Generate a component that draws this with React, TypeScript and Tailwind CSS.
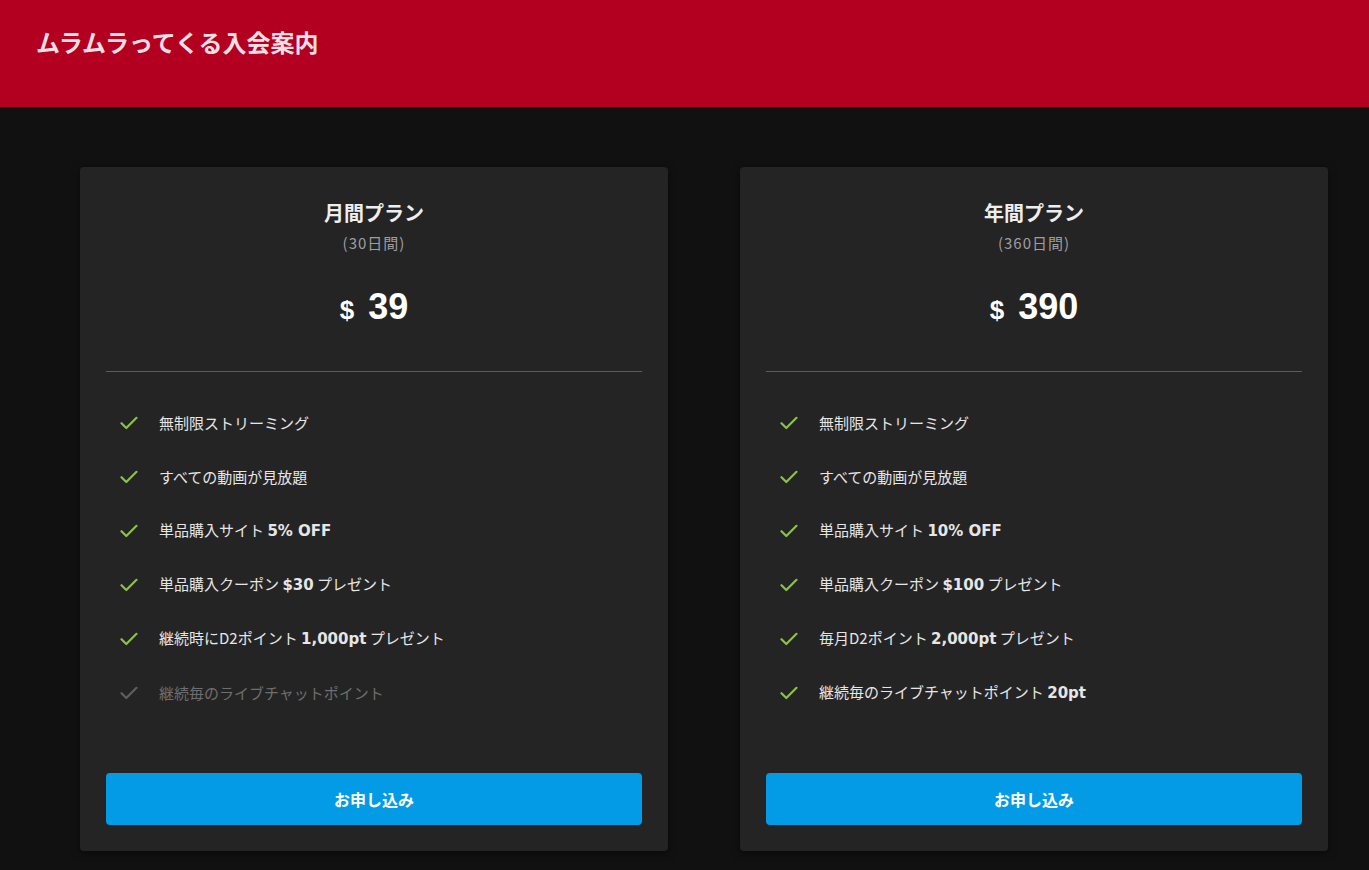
import type { ReactNode } from 'react';

type Feature = { text: ReactNode; muted?: boolean };

interface Plan {
  name: string;
  term: string;
  price: string;
  features: Feature[];
}

const B = ({ children }: { children: ReactNode }) => (
  <span className="font-bold" style={{ fontFamily: '"DejaVu Sans", "Noto Sans CJK JP", sans-serif' }}>
    {children}
  </span>
);

const plans: Plan[] = [
  {
    name: '月間プラン',
    term: '(30日間)',
    price: '39',
    features: [
      { text: '無制限ストリーミング' },
      { text: 'すべての動画が見放題' },
      { text: <>単品購入サイト <B>5% OFF</B></> },
      { text: <>単品購入クーポン <B>$30</B> プレゼント</> },
      { text: <>継続時にD2ポイント <B>1,000pt</B> プレゼント</> },
      { text: '継続毎のライブチャットポイント', muted: true },
    ],
  },
  {
    name: '年間プラン',
    term: '(360日間)',
    price: '390',
    features: [
      { text: '無制限ストリーミング' },
      { text: 'すべての動画が見放題' },
      { text: <>単品購入サイト <B>10% OFF</B></> },
      { text: <>単品購入クーポン <B>$100</B> プレゼント</> },
      { text: <>毎月D2ポイント <B>2,000pt</B> プレゼント</> },
      { text: <>継続毎のライブチャットポイント <B>20pt</B></> },
    ],
  },
];

const Check = ({ muted }: { muted?: boolean }) => (
  <svg width="18" height="14" viewBox="0 0 18 14" fill="none" className="shrink-0">
    <path
      d="M1.5 7.2 L6.3 12 L16.5 1.8"
      stroke={muted ? '#5f5f5f' : '#8bc34a'}
      strokeWidth="2.2"
      strokeLinecap="round"
      strokeLinejoin="round"
    />
  </svg>
);

const PlanCard = ({ plan }: { plan: Plan }) => (
  <div className="flex w-[588px] flex-col rounded-[4px] bg-[#242424] px-[26px] pb-[26px] pt-[32px] shadow-[0_2px_8px_rgba(0,0,0,0.5)]">
    <div className="text-center">
      <h2 className="text-[20px] font-bold leading-[28px] text-[#eeeeee]">{plan.name}</h2>
      <p className="mt-[2px] text-[15px] leading-[28px] tracking-[1px] text-[#9e9e9e]">{plan.term}</p>
      <div
        className="mt-[29px] flex items-baseline justify-center gap-[14px] font-bold text-white"
        style={{ fontFamily: '"Liberation Sans", Arial, sans-serif' }}
      >
        <span className="text-[26px]">$</span>
        <span className="text-[36px] leading-[42px]">{plan.price}</span>
      </div>
    </div>
    <div className="mt-[41px] h-px bg-[#5c5c5c]" />
    <ul className="mt-[39px] flex flex-col gap-[30px]">
      {plan.features.map((f, i) => (
        <li key={i} className="flex h-[24px] items-center gap-[21px] pl-[14px]">
          <Check muted={f.muted} />
          <span className={`text-[15px] ${f.muted ? 'text-[#6e6e6e]' : 'text-[#e6e6e6]'}`}>{f.text}</span>
        </li>
      ))}
    </ul>
    <button
      type="button"
      className="mt-[68px] h-[52px] w-full rounded-[4px] bg-[#039be5] text-[16px] font-bold text-white"
    >
      お申し込み
    </button>
  </div>
);

export default function App() {
  return (
    <div
      className="min-h-[870px] bg-[#111111]"
      style={{ fontFamily: '"Noto Sans CJK JP", "Noto Sans", sans-serif' }}
    >
      <header className="flex h-[107px] items-start bg-[#b30021] px-[36px] pt-[26px]">
        <h1 className="text-[24px] font-bold leading-[32px] text-[#f8dfe4]">ムラムラってくる入会案内</h1>
      </header>
      <main className="flex gap-[72px] pl-[80px] pt-[60px]">
        {plans.map((p) => (
          <PlanCard key={p.name} plan={p} />
        ))}
      </main>
    </div>
  );
}
